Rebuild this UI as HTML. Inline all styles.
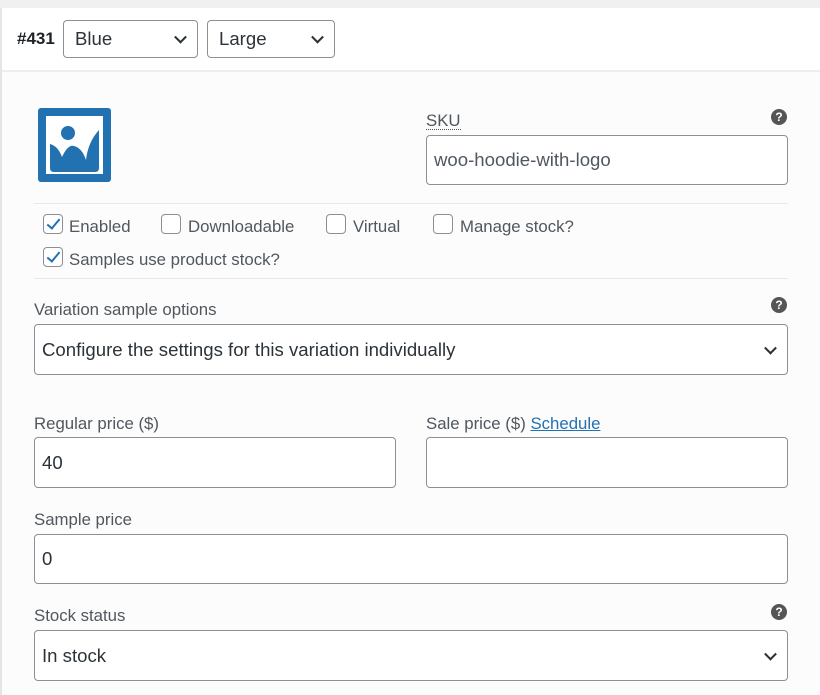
<!DOCTYPE html>
<html><head><style>
*{box-sizing:border-box;margin:0;padding:0}
body{width:820px;height:695px;background:#fcfcfc;font-family:"Liberation Sans",sans-serif;color:#50575e;position:relative;overflow:hidden;font-size:16px}
.a{position:absolute}
.box{position:absolute;background:#fff;border:1px solid #8c8f94;border-radius:4px;color:#2c3338;font-size:18.6px;padding-left:7px;display:flex;align-items:center}
.chev{position:absolute;right:12px;top:50%;width:9px;height:9px;border-right:2px solid #2c3338;border-bottom:2px solid #2c3338;transform:translateY(-70%) rotate(45deg)}
.lbl{position:absolute;font-size:16.8px;color:#50575e}
.cb{position:absolute;width:20px;height:20px;border:1px solid #8c8f94;border-radius:4px;background:#fff}
.cb.on::after{content:"";position:absolute;left:6px;top:1px;width:5px;height:11px;border-right:2px solid #2271b1;border-bottom:2px solid #2271b1;transform:rotate(40deg)}
.hr{position:absolute;height:1px;background:#e8e8e8}
.help{position:absolute;width:16px;height:16px;border-radius:50%;background:#555;color:#fff;font-size:12px;font-weight:bold;text-align:center;line-height:16px}
</style></head><body>
<div class="a" style="left:0;top:0;width:820px;height:8px;background:#f0f0f1"></div>
<div class="a" style="left:0;top:8px;width:820px;height:63px;background:#fff"></div>
<div class="a" style="left:0;top:70px;width:820px;height:2px;background:#eee"></div>
<div class="a" style="left:0;top:8px;width:2px;height:687px;background:#e5e5e5"></div>
<div class="a" style="left:17px;top:29px;font-weight:bold;font-size:17px;color:#1d2327">#431</div>
<div class="box" style="left:63px;top:20px;width:135px;height:38px;padding-left:11px">Blue<span class="chev"></span></div>
<div class="box" style="left:207px;top:20px;width:128px;height:38px;padding-left:11px">Large<span class="chev"></span></div>

<svg class="a" style="left:38px;top:108px" width="73" height="74" viewBox="0 0 73 74">
<rect x="0" y="0" width="73" height="74" rx="3" fill="#2271b1"/>
<rect x="8" y="8" width="57" height="58" fill="#fff"/>
<path d="M12 36 Q20 38 24 49 Q30 36 36 38 Q44 40 48 52 Q50 34 61 22 L61 60 Q61 64 57 64 L16 64 Q12 64 12 60 Z" fill="#2271b1"/>
<circle cx="30" cy="25" r="7" fill="#2271b1"/>
</svg>

<div class="lbl" style="left:426px;top:112px;border-bottom:1px dotted #50575e;line-height:17px">SKU</div>
<div class="help" style="left:771px;top:109px">?</div>
<div class="box" style="left:426px;top:135px;width:362px;height:50px;color:#50575e">woo-hoodie-with-logo</div>
<div class="hr" style="left:34px;top:203px;width:754px"></div>

<div class="cb on" style="left:43px;top:214px"></div><div class="lbl" style="left:69px;top:217px">Enabled</div>
<div class="cb" style="left:161px;top:214px"></div><div class="lbl" style="left:188px;top:217px">Downloadable</div>
<div class="cb" style="left:326px;top:214px"></div><div class="lbl" style="left:353px;top:217px">Virtual</div>
<div class="cb" style="left:433px;top:214px"></div><div class="lbl" style="left:460px;top:217px">Manage stock?</div>
<div class="cb on" style="left:43px;top:247px"></div><div class="lbl" style="left:69px;top:250px">Samples use product stock?</div>
<div class="hr" style="left:34px;top:278px;width:754px"></div>

<div class="lbl" style="left:34px;top:300px">Variation sample options</div>
<div class="help" style="left:771px;top:297px">?</div>
<div class="box" style="left:34px;top:324px;width:754px;height:51px">Configure the settings for this variation individually<span class="chev"></span></div>

<div class="lbl" style="left:34px;top:414px">Regular price ($)</div>
<div class="lbl" style="left:426px;top:414px">Sale price ($) <span style="color:#2271b1;text-decoration:underline">Schedule</span></div>
<div class="box" style="left:34px;top:437px;width:362px;height:51px">40</div>
<div class="box" style="left:426px;top:437px;width:362px;height:51px"></div>

<div class="lbl" style="left:34px;top:510px">Sample price</div>
<div class="box" style="left:34px;top:534px;width:754px;height:50px">0</div>

<div class="lbl" style="left:34px;top:606px">Stock status</div>
<div class="help" style="left:771px;top:604px">?</div>
<div class="box" style="left:34px;top:630px;width:754px;height:51px">In stock<span class="chev"></span></div>
</body></html>
